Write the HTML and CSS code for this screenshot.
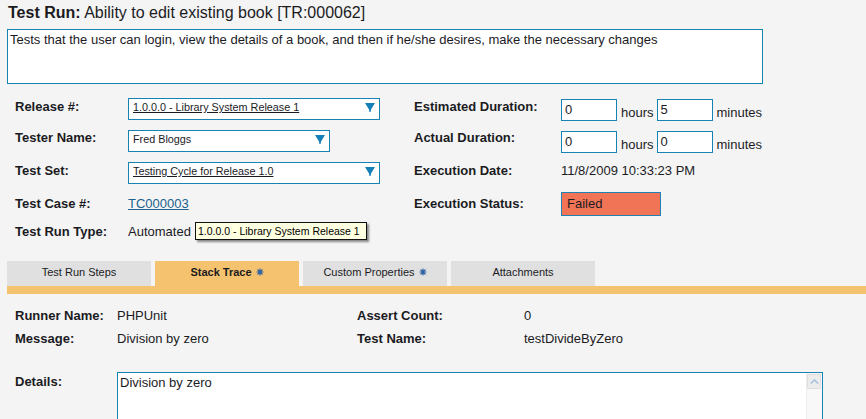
FILE: index.html
```html
<!DOCTYPE html>
<html>
<head>
<meta charset="utf-8">
<title>Test Run</title>
<link rel="stylesheet" href="styles.css">
</head>
<body>
<h1 class="title"><b>Test Run:</b> Ability to edit existing book [TR:000062]</h1>
<div class="desc">Tests that the user can login, view the details of a book, and then if he/she desires, make the necessary changes</div>

<div class="form">
  <div class="lbl m1">Release #:</div>
  <div class="sel wide"><span class="u">1.0.0.0 - Library System Release 1</span><svg class="arrow" viewBox="0 0 10 9" width="10" height="9"><polygon points="0,0 10,0 6,6.5 5.6,9 4.4,9 4,6.5"/></svg></div>
  <div class="lbl m1">Estimated Duration:</div>
  <div class="dur m1"><div class="inp">0</div><span class="unit">hours</span><div class="inp">5</div><span class="unit">minutes</span></div>

  <div class="lbl">Tester Name:</div>
  <div class="sel narrow"><span>Fred Bloggs</span><svg class="arrow" viewBox="0 0 10 9" width="10" height="9"><polygon points="0,0 10,0 6,6.5 5.6,9 4.4,9 4,6.5"/></svg></div>
  <div class="lbl">Actual Duration:</div>
  <div class="dur m1"><div class="inp">0</div><span class="unit">hours</span><div class="inp">0</div><span class="unit">minutes</span></div>

  <div class="lbl m1">Test Set:</div>
  <div class="sel wide"><span class="u">Testing Cycle for Release 1.0</span><svg class="arrow" viewBox="0 0 10 9" width="10" height="9"><polygon points="0,0 10,0 6,6.5 5.6,9 4.4,9 4,6.5"/></svg></div>
  <div class="lbl m1">Execution Date:</div>
  <div class="val m1">11/8/2009 10:33:23 PM</div>

  <div class="lbl m4">Test Case #:</div>
  <div class="val m4"><a class="link" href="#">TC000003</a></div>
  <div class="lbl m4">Execution Status:</div>
  <div class="status">Failed</div>

  <div class="lbl">Test Run Type:</div>
  <div class="val tipwrap">Automated<div class="tooltip">1.0.0.0 - Library System Release 1</div></div>
</div>

<div class="tabs">
  <div class="tab">Test Run Steps</div>
  <div class="tab active">Stack Trace <svg class="star" viewBox="0 0 8 8" width="8" height="8"><path d="M4 0.5V7.5M0.5 4H7.5M1.5 1.5L6.5 6.5M6.5 1.5L1.5 6.5"/></svg></div>
  <div class="tab">Custom Properties <svg class="star" viewBox="0 0 8 8" width="8" height="8"><path d="M4 0.5V7.5M0.5 4H7.5M1.5 1.5L6.5 6.5M6.5 1.5L1.5 6.5"/></svg></div>
  <div class="tab">Attachments</div>
</div>
<div class="tabbar"></div>

<div class="trace">
  <div class="lbl">Runner Name:</div>
  <div class="val">PHPUnit</div>
  <div class="lbl">Assert Count:</div>
  <div class="val">0</div>

  <div class="lbl">Message:</div>
  <div class="val">Division by zero</div>
  <div class="lbl">Test Name:</div>
  <div class="val">testDivideByZero</div>

  <div class="lbl m2">Details:</div>
  <div class="details">Division by zero
    <div class="scroll"><div class="sbtn"><svg viewBox="0 0 9 5" width="9" height="5"><path d="M0.8 4.5L4.5 1L8.2 4.5" fill="none" stroke="#a9c1e0" stroke-width="1.6"/></svg></div></div>
  </div>
</div>
</body>
</html>
```

FILE: styles.css
```css
html, body {
  margin: 0;
  padding: 0;
  background: #f4f4f4;
  font-family: "Liberation Sans", Arial, sans-serif;
  color: #1b1b1f;
}

.title {
  margin: 0;
  padding: 4px 0 0 8px;
  font-size: 16px;
  line-height: 18px;
  font-weight: normal;
}
.title b { font-weight: bold; }

.desc {
  margin: 7px 0 0 7px;
  width: 756px;
  height: 55px;
  box-sizing: border-box;
  border: 1px solid #1584b5;
  background: #fff;
  padding: 2px 2px;
  font-size: 13px;
  line-height: 15px;
}

.form {
  margin-top: 14px;
  padding-left: 15px;
  display: grid;
  grid-template-columns: 113px 286px 147px 1fr;
  grid-template-rows: 32px 32px 30px 32px 20px;
  align-items: start;
}

.lbl {
  font-size: 13px;
  line-height: 15px;
  font-weight: bold;
}
.val {
  font-size: 13px;
  line-height: 15px;
}
.m1 { margin-top: 1px; }
.m2 { margin-top: 2px; }
.m4 { margin-top: 4px; }

.sel {
  height: 22px;
  box-sizing: border-box;
  border: 1px solid #1584b5;
  background: #fff;
  display: flex;
  align-items: center;
  justify-content: space-between;
  padding: 0 4px 3px 4px;
  font-size: 10.8px;
  line-height: 13px;
}
.sel.wide { width: 252px; }
.sel.narrow { width: 202px; }
.sel .u { text-decoration: underline; }
.arrow { fill: #1580b8; display: block; }

.dur {
  display: flex;
  align-items: flex-end;
  font-size: 13px;
  line-height: 15px;
}
.inp {
  width: 56px;
  height: 22px;
  box-sizing: border-box;
  border: 1px solid #1584b5;
  background: #fff;
  padding-left: 3px;
  line-height: 20px;
  font-size: 13px;
}
.unit {
  margin: 0 3px 0 4px;
  line-height: 15px;
  padding-bottom: 1px;
}

.link {
  color: #21628e;
  text-decoration: underline;
}

.status {
  width: 100px;
  height: 24px;
  box-sizing: border-box;
  border: 1px solid #1f82b0;
  background: #f27457;
  padding-left: 5px;
  font-size: 13px;
  line-height: 22px;
}

.tipwrap { position: relative; }
.tooltip {
  position: absolute;
  left: 67px;
  top: -2px;
  width: 172px;
  height: 18px;
  box-sizing: border-box;
  border: 1px solid #111;
  background: #ffffe1;
  font-size: 10.5px;
  line-height: 16px;
  padding-left: 2px;
  white-space: nowrap;
  overflow: hidden;
  color: #000;
  box-shadow: 2px 2px 2px rgba(0, 0, 0, 0.45);
}

.tabs {
  margin: 17px 0 0 7px;
  display: flex;
  gap: 4px;
}
.tab {
  width: 144px;
  height: 25px;
  line-height: 23px;
  text-align: center;
  font-size: 11px;
  background: #e0e0e0;
  color: #1b1b1f;
}
.tab.active {
  background: #f5c36f;
  font-weight: bold;
}
.star {
  stroke: #2d62a3;
  stroke-width: 1.1;
  fill: none;
  vertical-align: 0;
  margin-left: 1px;
}
.tabbar {
  margin-left: 7px;
  height: 8px;
  background: #f5c36f;
}

.trace {
  padding: 14px 0 0 15px;
  display: grid;
  grid-template-columns: 102px 240px 167px 1fr;
  grid-template-rows: 23px 41px auto;
  align-items: start;
}
.details {
  grid-column: 2 / span 3;
  position: relative;
  width: 706px;
  height: 47px;
  box-sizing: border-box;
  border: 1px solid #1584b5;
  border-bottom: 0;
  background: #fff;
  padding: 2px 2px;
  font-size: 13px;
  line-height: 15px;
}
.scroll {
  position: absolute;
  top: 0;
  right: 0;
  bottom: 0;
  width: 16px;
  box-sizing: border-box;
  background: #f8f8f8;
  border-left: 1px solid #ededed;
}
.sbtn {
  margin: 1px 0 0 0;
  width: 14px;
  height: 15px;
  box-sizing: border-box;
  background: #ececec;
  border: 1px solid #dedede;
  border-radius: 1px;
  display: flex;
  align-items: center;
  justify-content: center;
}
.sbtn svg { display: block; }
```
